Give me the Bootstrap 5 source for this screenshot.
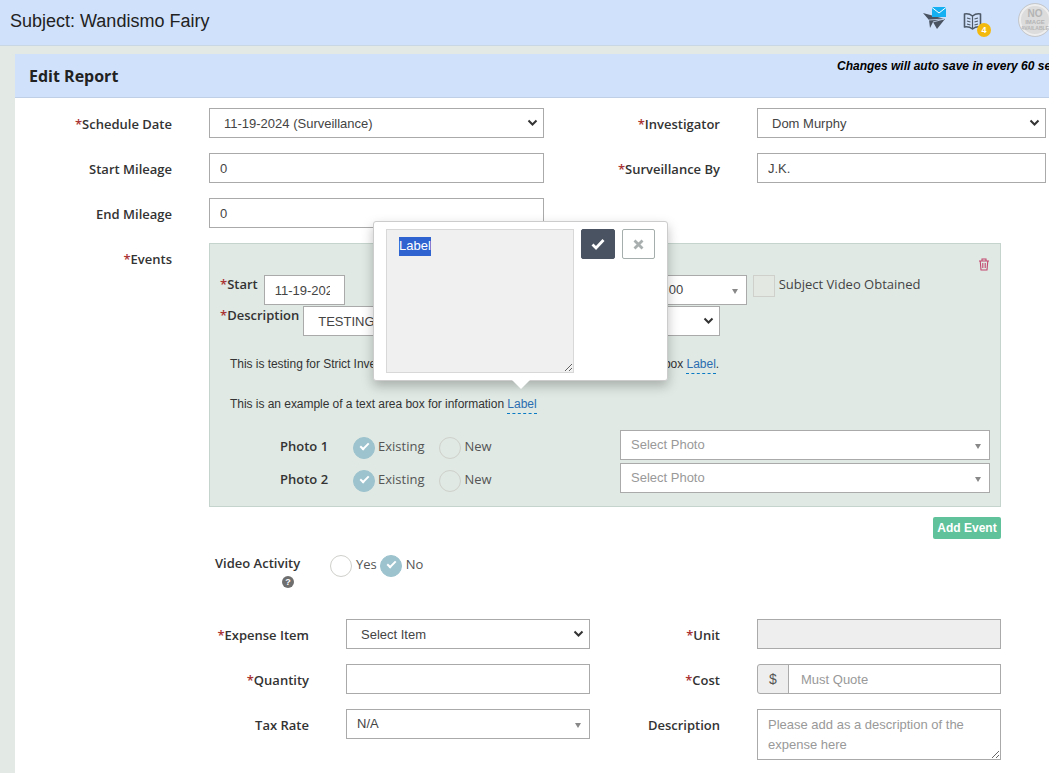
<!DOCTYPE html>
<html lang="en">
<head>
<meta charset="utf-8">
<title>Edit Report</title>
<link rel="stylesheet" href="https://cdn.jsdelivr.net/npm/bootstrap@5.3.0/dist/css/bootstrap.min.css">
<style>
html,body{height:773px;overflow:hidden}
body{background:#e3e9e5;font-family:"Liberation Sans",Arial,sans-serif;font-size:13px;color:#333;width:1049px}
.top-bar{height:46px;background:#d0e1fb;border-bottom:1px solid #c9d6e4;padding:0 0 0 10px}
.top-title{font-size:18px;line-height:42px;color:#222;margin:0;font-weight:400}
.top-icons{position:relative;width:1039px}
.ic-plane{position:absolute;left:912px;top:5px}
.ic-book{position:absolute;left:953px;top:12px}
.ic-count{position:absolute;left:967px;top:23px;width:14px;height:14px;border-radius:50%;background:#f4b90d;color:#fff;font:700 9px/14px "Liberation Sans",sans-serif;text-align:center}
.ic-avatar{position:absolute;left:1008px;top:3px;width:34px;height:34px;border-radius:50%;background:#dcdcdc;border:1px solid #c4c8ce;box-shadow:inset 0 0 0 2px #eee;color:#b4b4b4;font:700 10px/10px "Liberation Sans",sans-serif;text-align:center;padding-top:5px;overflow:hidden}
.ic-avatar span{display:block;font-size:6px;line-height:6px}
.ic-avatar span+span{font-size:5px}
.sheet{margin:8px 0 0 15px;width:1100px;border:0;border-radius:0;background:#fff;position:relative}
.sheet-head{height:44px;background:#d0e1fb;border-bottom:1px solid #bfd0e6;padding:0 0 0 14px;border-radius:0!important;position:relative}
.sheet-head h1{font:700 16px/44px "Open Sans",sans-serif;color:#222;margin:0}
.autosave{position:absolute;left:822px;top:4px;font:italic 700 12px/16px "Liberation Sans",sans-serif;color:#000;white-space:nowrap}
.sheet-body{padding:10px 0 0 0}
.fld-row{display:flex;margin-bottom:15px;align-items:flex-start}
.lbl{font:600 13px/18px "Open Sans",sans-serif;color:#333;text-align:right;padding-top:7px;margin:0;flex:none}
.lbl i{font-style:normal;color:#a33}
.w-a{width:157px}.w-b{width:176px}
.ctl{margin-left:37px;flex:none}
.w335{width:335px}.w289{width:289px}.w244{width:244px}
.form-control.fx,.form-select.fx{height:30px;min-height:30px;border:1px solid #aaa;border-radius:0;font-size:13px;line-height:18px;color:#444;padding:5px 10px;font-family:"Liberation Sans",sans-serif;background-color:#fff}
.form-select.fx{padding:6px 28px 4px 14px;background-size:11px 8px;background-position:right 5px center;background-image:url("data:image/svg+xml,%3Csvg xmlns='http://www.w3.org/2000/svg' viewBox='0 0 11 8'%3E%3Cpath d='M1.5 1.5 5.5 5.5 9.5 1.5' fill='none' stroke='%23333' stroke-width='2'/%3E%3C/svg%3E")}
.form-control.fx::placeholder{color:#999;opacity:1}
.form-control.fx:disabled{background:#eee}
.fake-sel{position:relative;display:block;height:30px;border:1px solid #aaa;background:#fff;font-size:13px;line-height:27px;padding-left:10px;color:#444}
.fake-sel::after{content:"";position:absolute;right:8px;top:13px;border:3px solid transparent;border-top:5px solid #888;border-bottom:0}
.ev-box{position:relative;width:792px;height:264px;margin-left:37px;background:#e0e9e4;border:1px solid #c5d4cc;padding:31px 0 0 10px;flex:none}
.ev-trash{position:absolute;right:10px;top:14px}
.ev-line{display:flex;align-items:flex-start}
.ev-lbl{font:600 13px/18px "Open Sans",sans-serif;color:#333;margin:0}
.ev-lbl i{font-style:normal;color:#a33}
.form-control.fx.ev-start{width:81px;margin-left:6px;padding-right:14px}
.ev-time{width:107px;margin-left:295px}
.sq{width:22px;height:22px;border:1px solid #cfd0cb;background:#e3e8e2;margin-left:6px;flex:none}
.ev-txt{font:400 13px/18px "Open Sans",sans-serif;color:#444;margin:0 0 0 4px}
.ev-desc{margin-top:1px}
.form-select.fx.ev-descsel{width:417px;margin-left:4px}
.ev-p{font-size:12px;line-height:20px;margin:18px 0 0 10px;color:#333;white-space:nowrap;letter-spacing:-.04px}
.ev-p.next{margin-top:20px}
.edit-link{color:#2a6db0;border-bottom:1px dashed #0a7ac4;text-decoration:none;padding-bottom:2px;letter-spacing:0}
.ph-row{display:flex;align-items:flex-start;padding-left:60px;height:33px}
.ph-first{margin-top:16px}
.ph-lbl{font:600 13px/18px "Open Sans",sans-serif;color:#333;width:73px;padding-top:7px}
.rd{display:inline-block;width:22px;height:22px;border-radius:50%;border:1px solid #cfd0cb;background:transparent;flex:none;position:relative;margin-top:7px}
.rd.on{background:#9dc3ce;border-color:#9dc3ce}
.rd.on::after{content:"";position:absolute;left:6px;top:5px;width:9px;height:5px;border-left:2px solid #fff;border-bottom:2px solid #fff;transform:rotate(-45deg)}
.rd-txt{font:400 13px/18px "Open Sans",sans-serif;color:#555;padding-top:7px;margin-left:3px;flex:none}
.rd.gap-new{margin-left:15px}
.ph-sel{width:370px;margin-left:auto;margin-right:10px;color:#999}
.add-wrap{width:986px;margin:-5px 0 15px;display:flex;justify-content:flex-end}
.btn.add-ev{background:#5fc29a;border:0;color:#fff;font:700 12px/22px "Liberation Sans",sans-serif;padding:0;width:68px;height:22px;border-radius:2px}
.vid-row{display:flex;padding-left:200px;height:65px;align-items:flex-start}
.vid-lbl{font:600 13px/18px "Open Sans",sans-serif;color:#333;width:115px;text-align:left}
.vid-help{display:block;width:12px;height:12px;border-radius:50%;background:#6e6e6e;color:#fff;font:700 9px/12px "Liberation Sans",sans-serif;text-align:center;margin:4px 0 0 67px}
.vid-row .rd{margin-top:1px}
.vid-row .rd-txt{padding-top:1px;margin:0 3px 0 4px}
.price{width:244px;flex-wrap:nowrap}
.price .input-group-text{width:32px;height:30px;padding:0;justify-content:center;background:#eee;border:1px solid #aaa;border-radius:3px 0 0 3px;font-size:14px;color:#555}
.price .form-control.fx{margin-left:-1px;padding-left:12px}
textarea.form-control.fx.exp{height:51px;line-height:20px;resize:vertical;padding:5px 10px}
.w-e{width:294px}.w-f{width:130px}
.pop-edit{position:absolute;left:358px;top:167px;width:295px;height:160px;background:#fff;border:1px solid #ccc;border-radius:3px;box-shadow:0 5px 12px rgba(0,0,0,.25);z-index:10;padding:7px 12px;display:flex;gap:7px;align-items:flex-start}
.pop-edit::after{content:"";position:absolute;left:137px;bottom:-9px;border:10px solid transparent;border-top:10px solid #fff;border-bottom:0}
.pop-area{width:188px;height:144px;background:#f0f0f0;border:1px solid #d8d8d8;font:13px/20px "Liberation Sans",sans-serif;padding:6px 12px;color:#333;resize:both;overflow:hidden;margin:0;flex:none}
.pop-sel{background:#2f63cf;color:#fff;padding:2px 0 3px;display:inline-block;line-height:14px}
.btn.pop-ok{width:34px;height:30px;padding:0;background:#4a5361;border:1px solid #4a5361;border-radius:2px;display:flex;align-items:center;justify-content:center}
.btn.pop-no{width:34px;height:30px;padding:0;background:#fff;border:1px solid #a5adad;border-radius:2px;display:flex;align-items:center;justify-content:center}
</style>
</head>
<body>
<header class="top-bar">
  <div class="top-icons">
    <h2 class="top-title">Subject: Wandismo Fairy</h2>
    <svg class="ic-plane" width="24" height="25" viewBox="0 0 24 25"><path fill="#4a5361" d="M1 8 23 14 15 24 11 17 8 23 7 15Z"/><path d="M7 15 22 14 11 17" fill="none" stroke="#d0e1fb" stroke-width=".8"/><rect x="10" y="2" width="14" height="10" fill="#14b0f2"/><path d="M10 2.5 17 8 24 2.5" fill="none" stroke="#fff" stroke-width="1"/></svg>
    <svg class="ic-book" width="19" height="19" viewBox="0 0 19 19"><path d="M1.5 2C4 1.5 7 2 9.5 4 12 2 15 1.5 17.5 2V15C15 14.5 12 15 9.5 17 7 15 4 14.5 1.5 15Z" fill="#d0e1fb" stroke="#4f5a68" stroke-width="1.6" stroke-linejoin="round"/><path d="M9.5 4V17M4 6 7.5 7M4 9 7.5 10M4 12 7.5 13M11.5 7 15 6M11.5 10 15 9M11.5 13 15 12" stroke="#4f5a68" stroke-width="1.2"/></svg>
    <span class="ic-count">4</span>
    <div class="ic-avatar">NO<span>IMAGE</span><span>AVAILABLE</span></div>
  </div>
</header>
<main class="card sheet">
  <div class="card-header sheet-head">
    <h1>Edit Report</h1>
    <span class="autosave">Changes will auto save in every 60 seconds</span>
  </div>
  <form class="sheet-body">
    <div class="fld-row">
      <label class="lbl w-a"><i>*</i>Schedule Date</label>
      <div class="ctl w335"><select class="form-select fx"><option>11-19-2024 (Surveillance)</option></select></div>
      <label class="lbl w-b"><i>*</i>Investigator</label>
      <div class="ctl w289"><select class="form-select fx"><option>Dom Murphy</option></select></div>
    </div>
    <div class="fld-row">
      <label class="lbl w-a">Start Mileage</label>
      <div class="ctl w335"><input class="form-control fx" value="0"></div>
      <label class="lbl w-b"><i>*</i>Surveillance By</label>
      <div class="ctl w289"><input class="form-control fx" value="J.K."></div>
    </div>
    <div class="fld-row">
      <label class="lbl w-a">End Mileage</label>
      <div class="ctl w335"><input class="form-control fx" value="0"></div>
    </div>
    <div class="fld-row">
      <label class="lbl w-a"><i>*</i>Events</label>
      <section class="ev-box">
        <svg class="ev-trash" width="12" height="13" viewBox="0 0 12 13"><path d="M1 3H11M4 3V1H8V3M2.2 3 3 12H9L9.8 3M4.8 5V10M7.2 5V10" fill="none" stroke="#c2476f" stroke-width="1.1"/></svg>
        <div class="ev-line">
          <p class="ev-lbl"><i>*</i>Start</p>
          <input class="form-control fx ev-start" value="11-19-2024">
          <span class="fake-sel ev-time">12:00</span>
          <span class="sq"></span>
          <p class="ev-txt">Subject Video Obtained</p>
        </div>
        <div class="ev-line ev-desc">
          <p class="ev-lbl"><i>*</i>Description</p>
          <select class="form-select fx ev-descsel"><option>TESTING</option></select>
        </div>
        <p class="ev-p">This is testing for Strict Investigator reports, this is, also an example of a text input box <a class="edit-link" href="#">Label</a>.</p>
        <p class="ev-p next">This is an example of a text area box for information <a class="edit-link" href="#">Label</a></p>
        <div class="ph-row ph-first">
          <span class="ph-lbl">Photo 1</span>
          <span class="rd on"></span><span class="rd-txt">Existing</span>
          <span class="rd gap-new"></span><span class="rd-txt">New</span>
          <span class="fake-sel ph-sel">Select Photo</span>
        </div>
        <div class="ph-row">
          <span class="ph-lbl">Photo 2</span>
          <span class="rd on"></span><span class="rd-txt">Existing</span>
          <span class="rd gap-new"></span><span class="rd-txt">New</span>
          <span class="fake-sel ph-sel">Select Photo</span>
        </div>
      </section>
    </div>
    <div class="add-wrap"><button type="button" class="btn add-ev">Add Event</button></div>
    <div class="vid-row">
      <div class="vid-lbl">Video Activity<span class="vid-help">?</span></div>
      <span class="rd"></span><span class="rd-txt">Yes</span>
      <span class="rd on"></span><span class="rd-txt">No</span>
    </div>
    <div class="fld-row">
      <label class="lbl w-e"><i>*</i>Expense Item</label>
      <div class="ctl w244"><select class="form-select fx"><option>Select Item</option></select></div>
      <label class="lbl w-f"><i>*</i>Unit</label>
      <div class="ctl w244"><input class="form-control fx" disabled></div>
    </div>
    <div class="fld-row">
      <label class="lbl w-e"><i>*</i>Quantity</label>
      <div class="ctl w244"><input class="form-control fx"></div>
      <label class="lbl w-f"><i>*</i>Cost</label>
      <div class="ctl input-group price"><span class="input-group-text">$</span><input class="form-control fx" placeholder="Must Quote"></div>
    </div>
    <div class="fld-row">
      <label class="lbl w-e">Tax Rate</label>
      <div class="ctl w244"><span class="fake-sel">N/A</span></div>
      <label class="lbl w-f">Description</label>
      <div class="ctl w244"><textarea class="form-control fx exp" placeholder="Please add as a description of the expense here"></textarea></div>
    </div>
  </form>
  <div class="pop-edit">
    <div class="pop-area"><span class="pop-sel">Label</span></div>
    <button type="button" class="btn pop-ok"><svg width="14" height="12" viewBox="0 0 14 12"><path d="M1.5 6.5 5 10 12.5 2" fill="none" stroke="#fff" stroke-width="2.8"/></svg></button>
    <button type="button" class="btn pop-no"><svg width="11" height="11" viewBox="0 0 11 11"><path d="M1.5 1.5 9.5 9.5M9.5 1.5 1.5 9.5" fill="none" stroke="#a9aeae" stroke-width="2.8"/></svg></button>
  </div>
</main>
<script src="https://cdn.jsdelivr.net/npm/bootstrap@5.3.0/dist/js/bootstrap.bundle.min.js"></script>
</body>
</html>
